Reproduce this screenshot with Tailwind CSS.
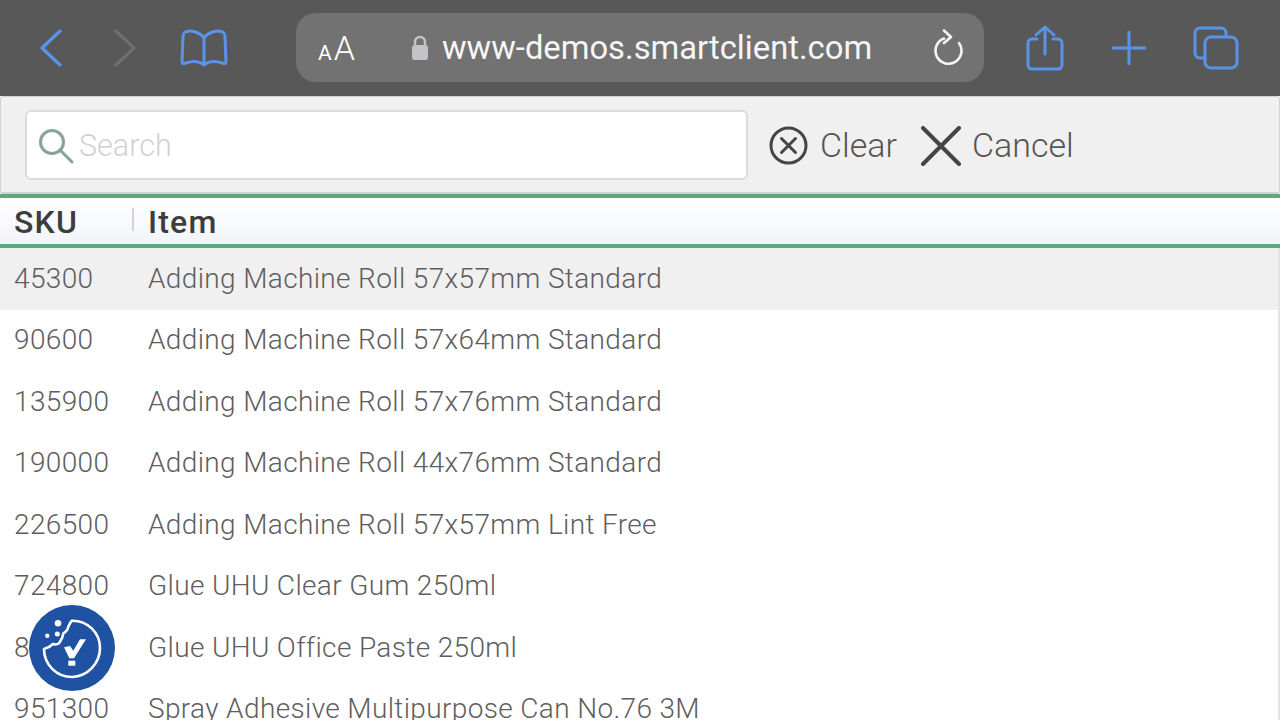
<!DOCTYPE html>
<html lang="en">
<head>
  <meta charset="UTF-8" />
  <title>Item search</title>
  <script src="https://cdn.jsdelivr.net/npm/@tailwindcss/browser@4"></script>
</head>
<body class="relative w-[1280px] h-[720px] overflow-hidden bg-white font-['Roboto',sans-serif]">
  <!-- Safari toolbar -->
  <div class="h-[96px] bg-[#585858] flex items-center">
    <div class="w-[296px] flex items-center shrink-0">
      <svg class="ml-[39px] w-[24px] h-[38px]" viewBox="0 0 24 38" fill="none" stroke="#5b93ea" stroke-width="3.2" stroke-linecap="round" stroke-linejoin="round"><path d="M21 2 L3 19 L21 36"/></svg>
      <svg class="ml-[50px] w-[24px] h-[38px]" viewBox="0 0 24 38" fill="none" stroke="#6f6f6f" stroke-width="3.2" stroke-linecap="round" stroke-linejoin="round"><path d="M3 2 L21 19 L3 36"/></svg>
      <svg class="ml-[43px] w-[48px] h-[38px]" viewBox="0 0 48 38" fill="none" stroke="#5b93ea" stroke-width="3" stroke-linecap="round" stroke-linejoin="round"><path d="M24 9 C20 3 9 0 4 4 C3 5 3 6 3 8 L2 32 C2 35 3 35 6 34 C12 32 19 32 24 36 C29 32 36 32 42 34 C45 35 46 35 46 32 L45 8 C45 6 45 5 44 4 C39 0 28 3 24 9 Z M24 9 L24 36"/></svg>
    </div>
    <div class="w-[688px] h-[69px] mt-[-1px] bg-[#727272] rounded-[20px] flex items-center shrink-0 text-white">
      <span class="ml-[22px] w-[38px] flex items-baseline leading-none"><span class="text-[21px] mr-[2px]">A</span><span class="text-[34px] font-light">A</span></span>
      <svg class="ml-[55px] w-[18px] h-[25px]" viewBox="0 0 18 25" fill="#c4c4c8"><path d="M4 10 V7 a5 5 0 0 1 10 0 V10" fill="none" stroke="#c4c4c8" stroke-width="2.4"/><rect x="1" y="10" width="16" height="15" rx="3"/></svg>
      <span class="ml-[13px] pt-[2px] text-[32.75px] leading-none text-[#f6f6f6]">www-demos.smartclient.com</span>
      <svg class="ml-auto mr-[21px] mt-[-2px] w-[30px] h-[36px]" viewBox="0 0 30 36" fill="none" stroke="#f4f4f4" stroke-width="2.6" stroke-linecap="round" stroke-linejoin="round"><path d="M11 9.5 A13 13 0 1 0 26 14"/><path d="M11 1.5 L18 8 L11 14"/></svg>
    </div>
    <svg class="ml-[42px] w-[38px] h-[46px]" viewBox="0 0 38 46" fill="none" stroke="#5b93ea" stroke-width="3" stroke-linecap="round" stroke-linejoin="round"><path d="M11 14 H6 a4 4 0 0 0 -4 4 V40 a4 4 0 0 0 4 4 H32 a4 4 0 0 0 4 -4 V18 a4 4 0 0 0 -4 -4 H27"/><path d="M19 29 V2 M10 10 L19 2 L28 10"/></svg>
    <svg class="ml-[48px] w-[34px] h-[34px]" viewBox="0 0 34 34" fill="none" stroke="#5b93ea" stroke-width="3" stroke-linecap="round"><path d="M17 1 V33 M1 17 H33"/></svg>
    <svg class="ml-[47px] w-[46px] h-[44px]" viewBox="0 0 46 44" fill="none" stroke="#5b93ea" stroke-width="3" stroke-linejoin="round"><path d="M33 11 V7 a5 5 0 0 0 -5 -5 H7 a5 5 0 0 0 -5 5 V27 a5 5 0 0 0 5 5 H12"/><rect x="12" y="11" width="32" height="31" rx="6"/></svg>
  </div>

  <!-- Search bar -->
  <div class="h-[98px] pt-[2px] bg-[#f0f0f0] border border-[#cfd3d3] border-b-2 rounded-[3px] flex items-center">
    <div class="ml-[24px] mt-[-2px] w-[723px] h-[70px] bg-white border-2 border-[#d8dcde] rounded-[6px] flex items-center">
      <svg class="ml-[11px] mt-[2px] w-[36px] h-[36px]" viewBox="0 0 36 36" fill="none" stroke="#88a498" stroke-width="3" stroke-linecap="round"><circle cx="14" cy="14" r="11.5"/><path d="M22 22 L34 34"/></svg>
      <span class="ml-[5px] pt-[4px] text-[30.5px] leading-none text-[#cfd2d0] font-light">Search</span>
    </div>
    <svg class="ml-[21px] w-[39px] h-[39px]" viewBox="0 0 39 39" fill="none" stroke="#454545" stroke-width="3" stroke-linecap="round"><circle cx="19.5" cy="19.5" r="17.5"/><path d="M12.5 12.5 L26.5 26.5 M26.5 12.5 L12.5 26.5"/></svg>
    <span class="ml-[12px] mt-[-2px] text-[34px] leading-none text-[#555] font-light">Clear</span>
    <svg class="ml-[24px] w-[40px] h-[40px]" viewBox="0 0 40 40" fill="none" stroke="#454545" stroke-width="4" stroke-linecap="round"><path d="M2 2 L38 38 M38 2 L2 38"/></svg>
    <span class="ml-[11px] mt-[-2px] text-[34px] leading-none text-[#555] font-light">Cancel</span>
  </div>

  <!-- Grid header -->
  <div class="h-[54px] border-y-4 border-[#64a67c] bg-gradient-to-b from-white to-[#f2f4fa] flex items-center">
    <span class="w-[118px] ml-[14px] text-[32px] font-medium text-[#3d3d3d] leading-none tracking-[1.2px] pt-[2px]">SKU</span>
    <span class="w-[2px] h-[23px] bg-[#d4d4d4] mt-[-3px]"></span>
    <span class="ml-[14px] text-[32px] font-medium text-[#3d3d3d] leading-none tracking-[1.2px] pt-[2px]">Item</span>
  </div>

  <!-- Rows -->
  <div class="text-[28px] font-light tracking-[0.36px] text-[#5e5e5e] border-r-2 border-[#e4e4e4]">
    <div class="h-[61.5px] flex items-center bg-[#f0f0f0]"><span class="w-[134px] pl-[14px]">45300</span><span class="ml-[14px]">Adding Machine Roll 57x57mm Standard</span></div>
    <div class="h-[61.5px] flex items-center"><span class="w-[134px] pl-[14px]">90600</span><span class="ml-[14px]">Adding Machine Roll 57x64mm Standard</span></div>
    <div class="h-[61.5px] flex items-center"><span class="w-[134px] pl-[14px]">135900</span><span class="ml-[14px]">Adding Machine Roll 57x76mm Standard</span></div>
    <div class="h-[61.5px] flex items-center"><span class="w-[134px] pl-[14px]">190000</span><span class="ml-[14px]">Adding Machine Roll 44x76mm Standard</span></div>
    <div class="h-[61.5px] flex items-center"><span class="w-[134px] pl-[14px]">226500</span><span class="ml-[14px]">Adding Machine Roll 57x57mm Lint Free</span></div>
    <div class="h-[61.5px] flex items-center"><span class="w-[134px] pl-[14px]">724800</span><span class="ml-[14px]">Glue UHU Clear Gum 250ml</span></div>
    <div class="h-[61.5px] flex items-center"><span class="w-[134px] pl-[14px]">815400</span><span class="ml-[14px]">Glue UHU Office Paste 250ml</span></div>
    <div class="h-[61.5px] flex items-center"><span class="w-[134px] pl-[14px]">951300</span><span class="ml-[14px]">Spray Adhesive Multipurpose Can No.76 3M</span></div>
  </div>

  <!-- Cookie badge -->
  <div class="absolute left-[29px] top-[605px] w-[86px] h-[86px] rounded-full bg-[#1f52a3] flex items-center justify-center">
    <svg class="w-[62px] h-[62px]" viewBox="0 0 62 62" fill="none" stroke="white" stroke-width="2.6" stroke-linecap="round" stroke-linejoin="round"><path d="M30.7 3.7 A28 28 0 1 1 3 32 C7 31 10 29 12 27 C15 28 18 27 19 24.7 C21 22 22 19 22.3 16.3 C25 15 27 12 27.3 9.7 C28 8 29 6 30.7 3.7 Z"/><g fill="white" stroke="none"><circle cx="17" cy="6.3" r="3.3"/><circle cx="16.3" cy="17" r="2.5"/><circle cx="6.3" cy="18.7" r="2.2"/><path d="M23 30.3 L29 29 L32.3 33.7 L39 22.3 L45 22.3 L33 41.3 L28.3 41.3 Z"/><rect x="27.3" y="43.7" width="7" height="5"/></g></svg>
  </div>
</body>
</html>
